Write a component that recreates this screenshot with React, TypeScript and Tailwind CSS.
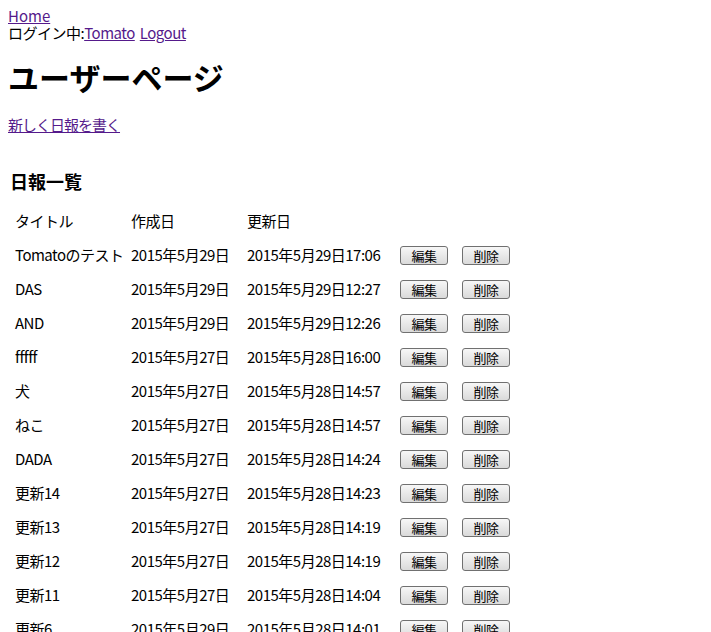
import React from "react";

const rows = [
  ["Tomatoのテスト", "2015年5月29日", "2015年5月29日17:06"],
  ["DAS", "2015年5月29日", "2015年5月29日12:27"],
  ["AND", "2015年5月29日", "2015年5月29日12:26"],
  ["fffff", "2015年5月27日", "2015年5月28日16:00"],
  ["犬", "2015年5月27日", "2015年5月28日14:57"],
  ["ねこ", "2015年5月27日", "2015年5月28日14:57"],
  ["DADA", "2015年5月27日", "2015年5月28日14:24"],
  ["更新14", "2015年5月27日", "2015年5月28日14:23"],
  ["更新13", "2015年5月27日", "2015年5月28日14:19"],
  ["更新12", "2015年5月27日", "2015年5月28日14:19"],
  ["更新11", "2015年5月27日", "2015年5月28日14:04"],
  ["更新6", "2015年5月29日", "2015年5月28日14:01"],
];

const Btn = ({ label }: { label: string }) => (
  <button className="w-[48px] h-[19px] border border-[#707070] rounded-[3px] bg-gradient-to-b from-[#f7f7f7] to-[#dadada] text-[13px] leading-none text-black">
    {label}
  </button>
);

export default function App() {
  return (
    <div
      className="bg-white text-black min-h-screen pt-[8px] px-[8px] text-[15px]"
      style={{ fontFamily: '"Noto Sans CJK JP", sans-serif' }}
    >
      <div className="leading-[16px]">
        <a href="#" className="text-[#551a8b] underline">Home</a>
      </div>
      <div className="leading-[18px] tracking-[-0.5px]">
        ログイン中:<a href="#" className="text-[#551a8b] underline">Tomato</a>
        <a href="#" className="ml-[5px] text-[#551a8b] underline">Logout</a>
      </div>
      <h1 className="mt-[16px] text-[31px] font-bold leading-[38px]">ユーザーページ</h1>
      <div className="mt-[20px] leading-[17px] tracking-[-1px]">
        <a href="#" className="text-[#551a8b] underline">新しく日報を書く</a>
      </div>
      <h3 className="mt-[37px] pl-[2px] text-[18px] font-bold leading-[22px]">日報一覧</h3>
      <div className="mt-[12px] pl-[7px] tracking-[-0.5px]">
        <div className="grid grid-cols-[116px_116px_153px_62px_48px] h-[34px] items-center">
          <div>タイトル</div>
          <div>作成日</div>
          <div>更新日</div>
          <div></div>
          <div></div>
        </div>
        {rows.map((r, i) => (
          <div
            key={i}
            className="grid grid-cols-[116px_116px_153px_62px_48px] h-[34px] items-center whitespace-nowrap"
          >
            <div>{r[0]}</div>
            <div>{r[1]}</div>
            <div>{r[2]}</div>
            <div><Btn label="編集" /></div>
            <div><Btn label="削除" /></div>
          </div>
        ))}
      </div>
    </div>
  );
}
